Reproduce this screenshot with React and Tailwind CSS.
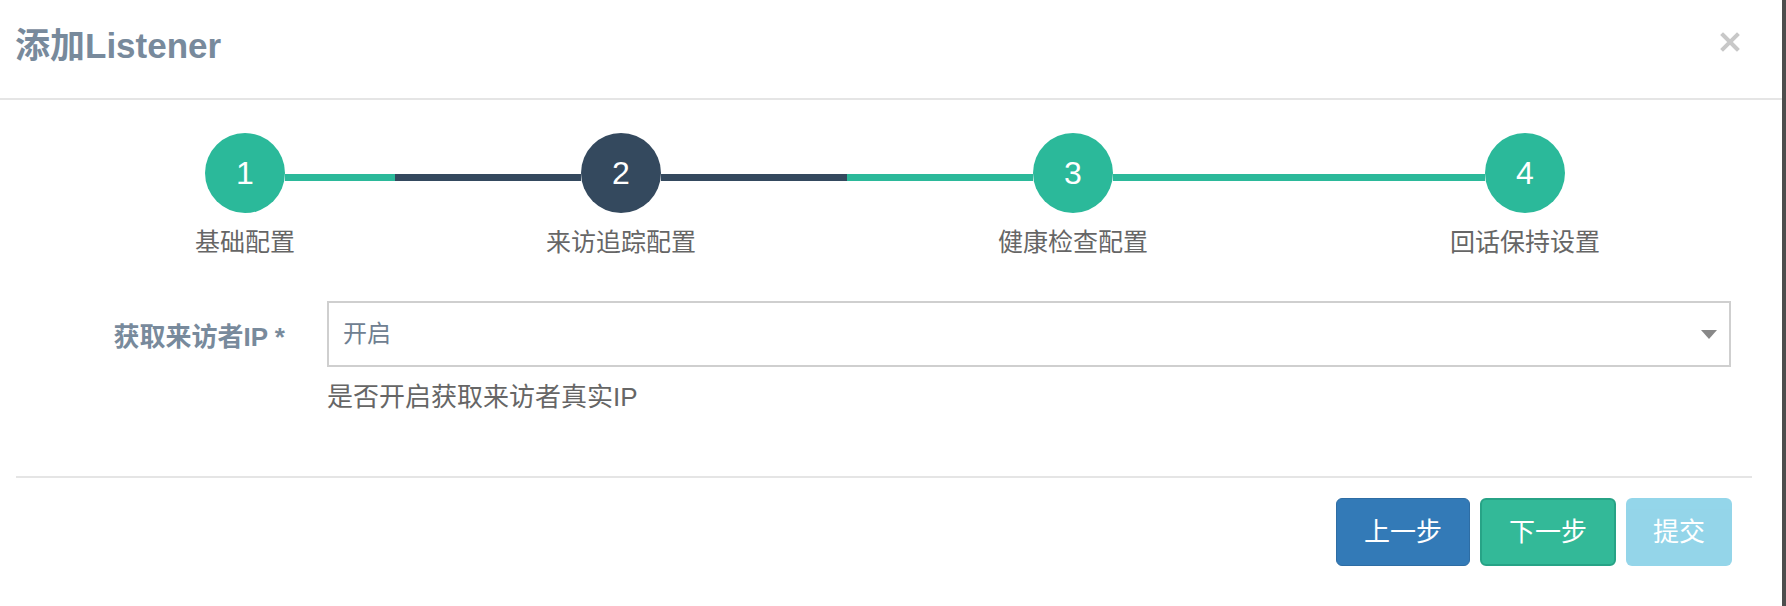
import React from "react";

const steps = [
  { n: 1, label: "基础配置", width: "w-[300px]", left: "bg-transparent", right: "bg-[#2bb99a]", circle: "bg-[#2bb99a]" },
  { n: 2, label: "来访追踪配置", width: "w-[452px]", left: "bg-[#34495e]", right: "bg-[#34495e]", circle: "bg-[#34495e]" },
  { n: 3, label: "健康检查配置", width: "w-[452px]", left: "bg-[#2bb99a]", right: "bg-[#2bb99a]", circle: "bg-[#2bb99a]" },
  { n: 4, label: "回话保持设置", width: "w-[452px]", left: "bg-[#2bb99a]", right: "bg-transparent", circle: "bg-[#2bb99a]" },
];

function Step({ step }) {
  return (
    <div className={`${step.width} flex flex-col items-center`}>
      <div className="flex w-full items-center">
        <div className={`flex-1 h-[7px] mt-[8px] ${step.left}`} />
        <div
          className={`w-[80px] h-[80px] rounded-full ${step.circle} text-white text-[32px] flex items-center justify-center`}
        >
          {step.n}
        </div>
        <div className={`flex-1 h-[7px] mt-[8px] ${step.right}`} />
      </div>
      <div className="mt-[14px] text-[25px] leading-[30px] text-[#666]">{step.label}</div>
    </div>
  );
}

export default function App() {
  return (
    <div
      className="flex w-[1786px] h-[606px] bg-white"
      style={{ fontFamily: '"Liberation Sans", "Noto Sans CJK SC", sans-serif' }}
    >
      <div className="w-[1782px] flex flex-col">
        {/* header */}
        <div className="h-[100px] flex items-center justify-between pl-[15px] pr-[42px] border-b-2 border-[#e5e5e5]">
          <h4 className="text-[35px] font-bold text-[#788a9c] mb-[6px]">添加Listener</h4>
          <button type="button" className="mb-[14px]">
            <svg width="20" height="20" viewBox="0 0 20 20">
              <path d="M3 3 L17 17 M17 3 L3 17" stroke="#c8c8c8" strokeWidth="4" strokeLinecap="square" />
            </svg>
          </button>
        </div>

        {/* body */}
        <div className="pl-[16px] pr-[30px]">
          <div className="flex pl-[79px] pt-[33px]">
            {steps.map((s) => (
              <Step key={s.n} step={s} />
            ))}
          </div>

          <div className="flex mt-[44px] pr-[21px]">
            <label className="w-[269px] text-right text-[26px] font-bold text-[#788a9c] pt-[20px] leading-[32px]">
              获取来访者IP *
            </label>
            <div className="flex-1 ml-[42px] flex flex-col">
              <div className="h-[66px] border-2 border-[#cfcfcf] flex items-center justify-between pl-[14px] pr-[12px]">
                <span className="text-[24px] text-[#6f8091]">开启</span>
                <svg width="16" height="9" viewBox="0 0 16 9">
                  <path d="M0 0 H16 L8 9 Z" fill="#888" />
                </svg>
              </div>
              <div className="mt-[14px] text-[26px] leading-[32px] text-[#666]">是否开启获取来访者真实IP</div>
            </div>
          </div>

          <div className="mt-[63px] border-t-2 border-[#e5e5e5]" />

          <div className="flex justify-end gap-[10px] pt-[20px] pr-[20px]">
            <button
              type="button"
              className="h-[68px] px-[27px] rounded-[6px] bg-[#337ab7] border border-[#2e6da4] text-white text-[26px]"
            >
              上一步
            </button>
            <button
              type="button"
              className="h-[68px] px-[27px] rounded-[6px] bg-[#33b998] border-2 border-[#27a386] text-white text-[26px]"
            >
              下一步
            </button>
            <button
              type="button"
              className="h-[68px] px-[27px] rounded-[6px] bg-[#5bc0de] opacity-65 text-white text-[26px]"
            >
              提交
            </button>
          </div>
        </div>
      </div>
      <div className="w-[4px] bg-[#4d4d4d]" />
    </div>
  );
}
